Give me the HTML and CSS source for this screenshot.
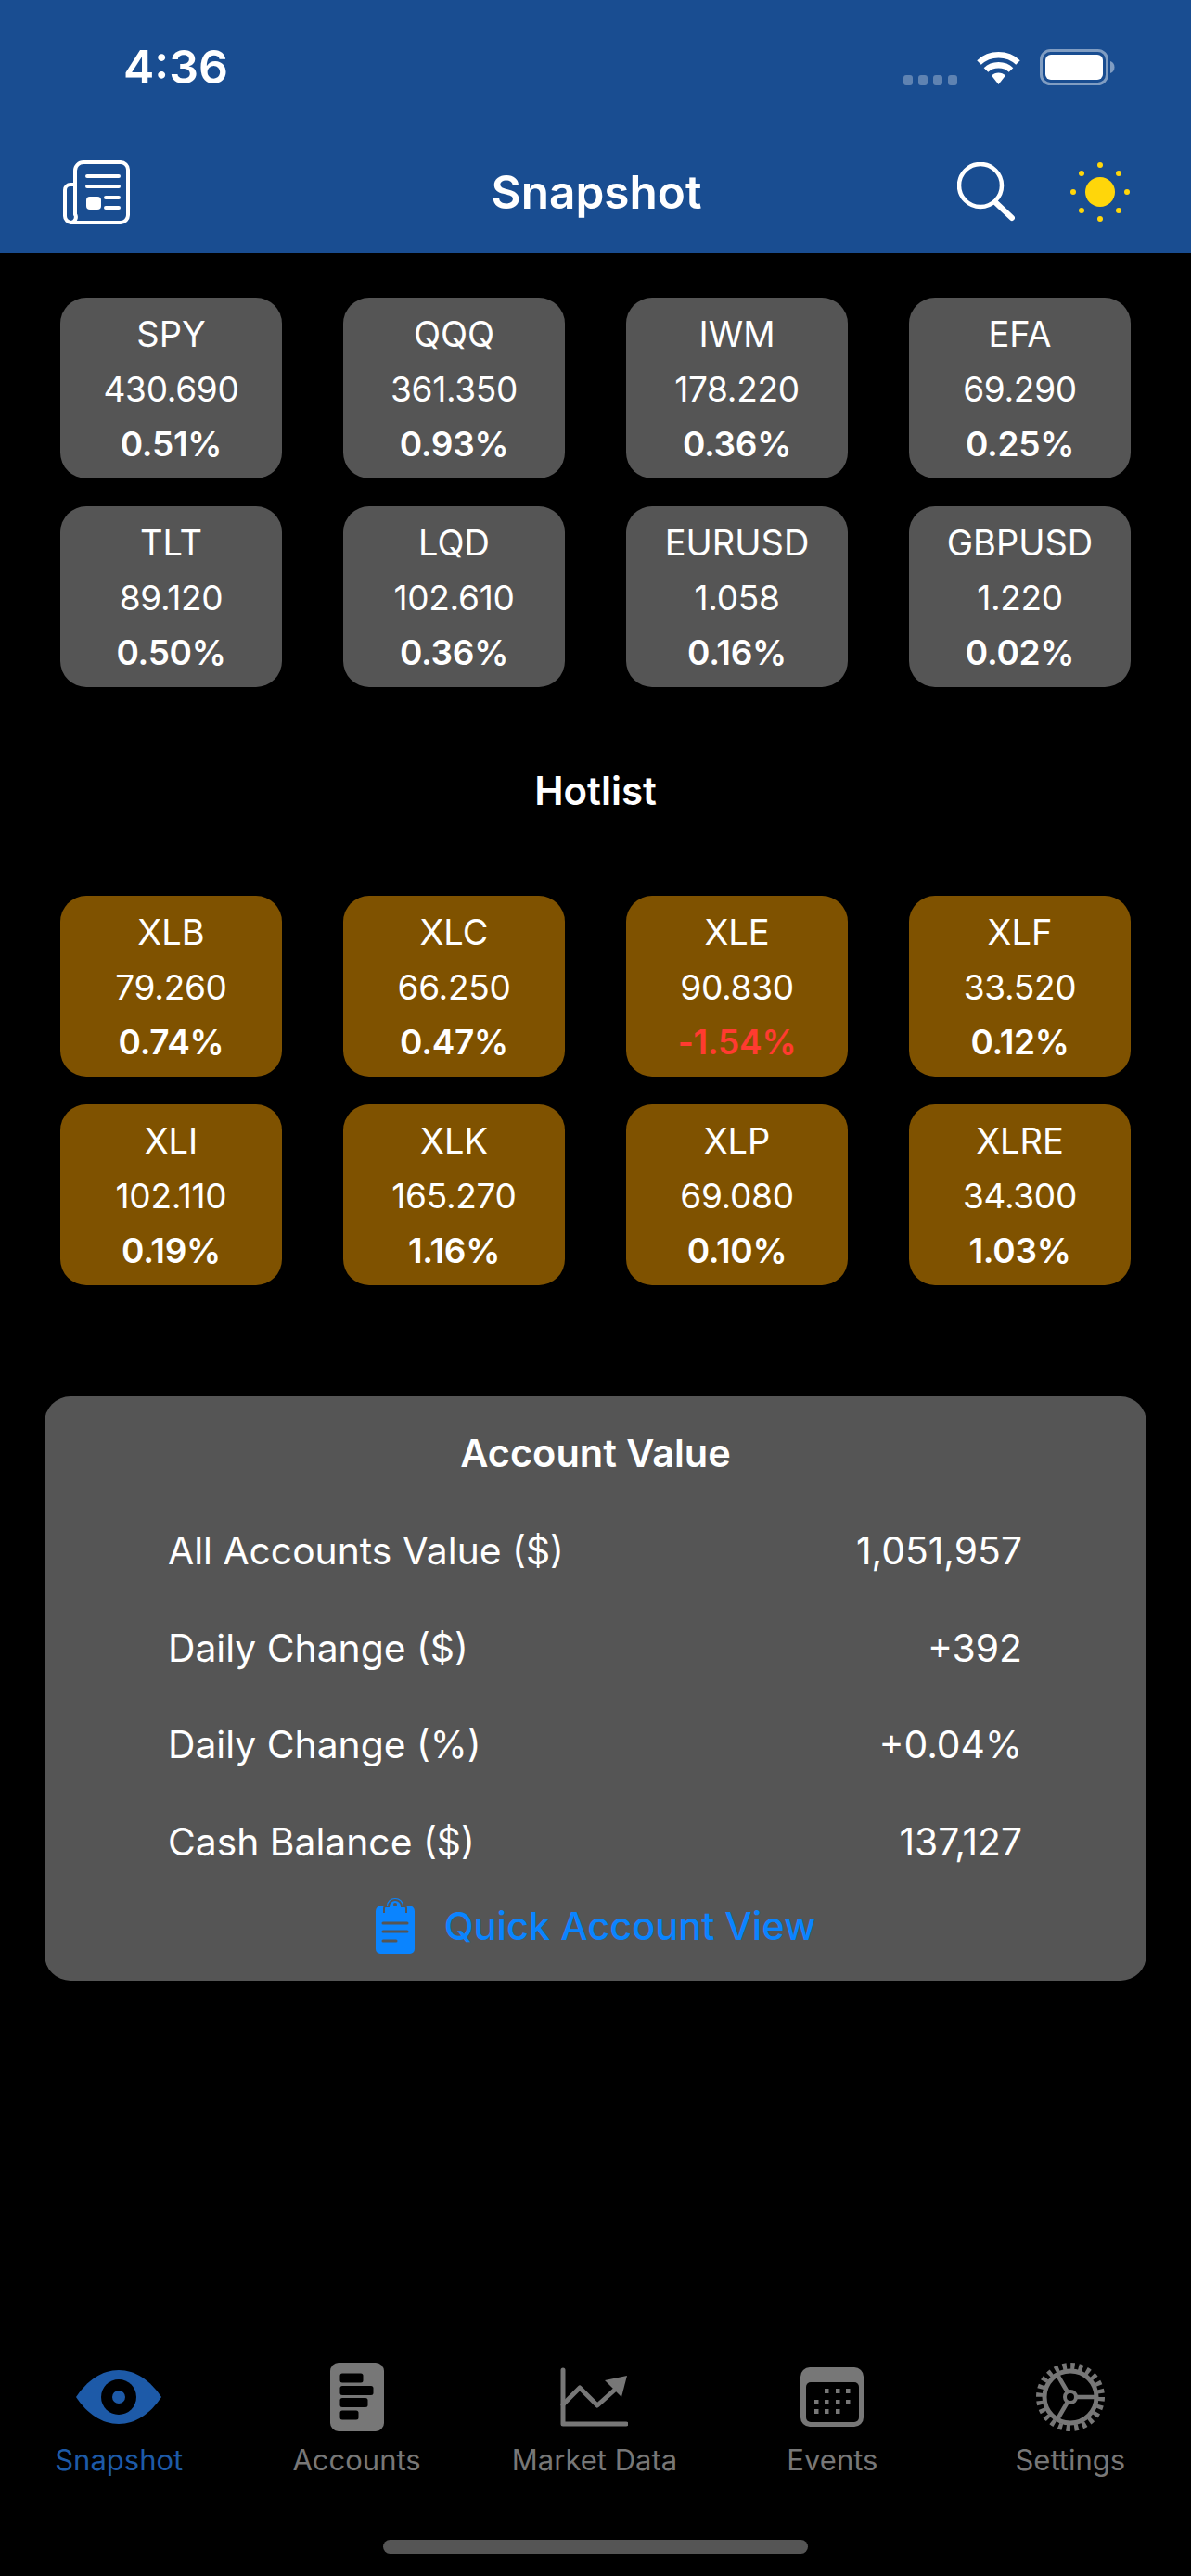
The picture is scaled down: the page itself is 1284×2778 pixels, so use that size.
FILE: index.html
```html
<!DOCTYPE html>
<html>
<head>
  <meta charset="UTF-8">
  <meta name="viewport" content="width=device-width, initial-scale=1.0"/>
  <title>Snapshot</title>
  <link rel="stylesheet" href="styles.css">
</head>
<body>
<div class="page">
  <div class="header">
    <div class="status">
      <span class="time">4:36</span>
      <div class="status-icons">
        <svg width="58" height="39" viewBox="0 0 58 39"><g fill="#fff" opacity=".3"><rect x="0" y="28" width="10" height="11" rx="3"/><rect x="16" y="28" width="10" height="11" rx="3"/><rect x="32" y="28" width="10" height="11" rx="3"/><rect x="48" y="28" width="10" height="11" rx="3"/></g></svg>
        <svg width="49" height="39" viewBox="0 0 49 39"><g fill="none" stroke="#fff" stroke-width="6.5"><path d="M3.5 14.5C15 3.5 34 3.5 45.5 14.5"/><path d="M11 22.5C18 15.500 31 15.500 38 22.500"/></g><path d="M17 28.500C21 24.500 28 24.500 32 28.500L24.500 38Z" fill="#fff"/></svg>
        <svg width="81" height="39" viewBox="0 0 81 39"><rect x="1.500" y="1.500" width="71" height="36" rx="10" fill="none" stroke="#fff" stroke-opacity=".45" stroke-width="3"/><rect x="6" y="6" width="62" height="27" rx="6" fill="#fff"/><path d="M76 13c3 1 4.500 3.500 4.500 6.500s-1.500 5.500-4.500 6.500z" fill="#fff" opacity=".45"/></svg>
      </div>
    </div>
    <div class="nav">
      <svg class="nav-left" width="72" height="69" viewBox="0 0 72 69"><g fill="none" stroke="#fff" stroke-width="4" stroke-linecap="round"><path d="M13 58V11a9 9 0 0 1 9-9h40a8 8 0 0 1 8 8v49a8 8 0 0 1-8 8H9"/><path d="M13 26H8a6 6 0 0 0-6 6v28a7 7 0 0 0 7 7a6 6 0 0 0 4-9"/><path d="M26 17H60M26 28H60M46 40H60M46 51H60"/></g><rect x="25" y="39" width="16" height="14" rx="4" fill="#fff"/></svg>
      <div class="nav-title">Snapshot</div>
      <div class="nav-right">
        <svg width="62" height="64" viewBox="0 0 62 64"><circle cx="25" cy="25" r="23" fill="none" stroke="#fff" stroke-width="4.500"/><path d="M41 43L59 60" stroke="#fff" stroke-width="6" stroke-linecap="round"/></svg>
        <svg width="64" height="64" viewBox="0 0 64 64"><circle cx="32" cy="32" r="16" fill="#ffd60a"/><g fill="#ffd60a"><circle cx="32" cy="3" r="3"/><circle cx="32" cy="61" r="3"/><circle cx="3" cy="32" r="3"/><circle cx="61" cy="32" r="3"/><circle cx="12" cy="12" r="3"/><circle cx="52" cy="12" r="3"/><circle cx="12" cy="52" r="3"/><circle cx="52" cy="52" r="3"/></g></svg>
      </div>
    </div>
  </div>

  <div class="main">
    <div class="tickers">
      <div class="ticker"><span>SPY</span><span class="price">430.690</span><b>0.51%</b></div>
      <div class="ticker"><span>QQQ</span><span class="price">361.350</span><b>0.93%</b></div>
      <div class="ticker"><span>IWM</span><span class="price">178.220</span><b>0.36%</b></div>
      <div class="ticker"><span>EFA</span><span class="price">69.290</span><b>0.25%</b></div>
      <div class="ticker"><span>TLT</span><span class="price">89.120</span><b>0.50%</b></div>
      <div class="ticker"><span>LQD</span><span class="price">102.610</span><b>0.36%</b></div>
      <div class="ticker"><span>EURUSD</span><span class="price">1.058</span><b>0.16%</b></div>
      <div class="ticker"><span>GBPUSD</span><span class="price">1.220</span><b>0.02%</b></div>
    </div>

    <h2 class="hotlist-title">Hotlist</h2>

    <div class="tickers hot">
      <div class="ticker"><span>XLB</span><span class="price">79.260</span><b>0.74%</b></div>
      <div class="ticker"><span>XLC</span><span class="price">66.250</span><b>0.47%</b></div>
      <div class="ticker"><span>XLE</span><span class="price">90.830</span><b class="neg">-1.54%</b></div>
      <div class="ticker"><span>XLF</span><span class="price">33.520</span><b>0.12%</b></div>
      <div class="ticker"><span>XLI</span><span class="price">102.110</span><b>0.19%</b></div>
      <div class="ticker"><span>XLK</span><span class="price">165.270</span><b>1.16%</b></div>
      <div class="ticker"><span>XLP</span><span class="price">69.080</span><b>0.10%</b></div>
      <div class="ticker"><span>XLRE</span><span class="price">34.300</span><b>1.03%</b></div>
    </div>

    <div class="account">
      <div class="account-title">Account Value</div>
      <div class="account-row"><span>All Accounts Value ($)</span><span>1,051,957</span></div>
      <div class="account-row"><span>Daily Change ($)</span><span>+392</span></div>
      <div class="account-row"><span>Daily Change (%)</span><span>+0.04%</span></div>
      <div class="account-row"><span>Cash Balance ($)</span><span>137,127</span></div>
      <div class="quick">
        <svg width="42" height="60" viewBox="0 0 42 60"><path d="M6 8h6a9 8 0 0 1 18 0h6a6 6 0 0 1 6 6v41a5 5 0 0 1-5 5H5a5 5 0 0 1-5-5V14a6 6 0 0 1 6-6z" fill="#0a84ff"/><path d="M9 16v-5a2 2 0 0 1 2-2h3a7 7 0 0 1 14 0h3a2 2 0 0 1 2 2v5" fill="none" stroke="#555" stroke-width="2"/><circle cx="21" cy="7" r="2" fill="#555"/><path d="M8 27H34M8 36H34M8 46H22" stroke="#555" stroke-width="3" stroke-linecap="round"/></svg>
        <span>Quick Account View</span>
      </div>
    </div>
  </div>

  <div class="tabbar">
    <div class="tab active">
      <div class="tab-icon"><svg width="92" height="58" viewBox="0 0 92 58"><path d="M0 29C12 11 28 0 46 0s34 11 46 29C80 47 64 58 46 58S12 47 0 29z" fill="#1d5aa8"/><circle cx="46" cy="29" r="19" fill="#000"/><circle cx="46" cy="29" r="7" fill="#1d5aa8"/></svg></div>
      <span>Snapshot</span>
    </div>
    <div class="tab">
      <div class="tab-icon"><svg width="58" height="74" viewBox="0 0 58 74"><rect width="58" height="74" rx="9" fill="#777"/><g fill="#000"><rect x="10.500" y="11.500" width="25" height="10" rx="2.500"/><rect x="10.500" y="25" width="36" height="10" rx="2.500"/><rect x="10.500" y="38" width="30" height="10" rx="2.500"/><rect x="10.500" y="51.500" width="20" height="10" rx="2.500"/></g></svg></div>
      <span>Accounts</span>
    </div>
    <div class="tab">
      <div class="tab-icon"><svg width="73" height="64" viewBox="0 0 73 64"><g fill="none" stroke="#777" stroke-width="5" stroke-linecap="round" stroke-linejoin="round"><path d="M3 3V61H71"/><path d="M3 40L21 22L40 41L59 24"/></g><path d="M72 9L48 14L66 32Z" fill="#777"/></svg></div>
      <span>Market Data</span>
    </div>
    <div class="tab">
      <div class="tab-icon"><svg width="68" height="64" viewBox="0 0 68 64"><rect width="68" height="64" rx="10" fill="#777"/><rect x="6" y="16" width="57" height="43" rx="5" fill="#000"/><g fill="#777"><rect x="26" y="23" width="4.500" height="5"/><rect x="38" y="23" width="4.500" height="5"/><rect x="49" y="23" width="4.500" height="5"/><rect x="15" y="35" width="4.500" height="5"/><rect x="26" y="35" width="4.500" height="5"/><rect x="38" y="35" width="4.500" height="5"/><rect x="49" y="35" width="4.500" height="5"/><rect x="15" y="45" width="4.500" height="5"/><rect x="26" y="45" width="4.500" height="5"/><rect x="38" y="45" width="4.500" height="5"/></g></svg></div>
      <span>Events</span>
    </div>
    <div class="tab">
      <div class="tab-icon"><svg width="74" height="74" viewBox="0 0 74 74"><circle cx="37" cy="37" r="33.500" fill="none" stroke="#777" stroke-width="7" stroke-dasharray="4.400 4.370"/><circle cx="37" cy="37" r="28" fill="#000" stroke="#777" stroke-width="5"/><path d="M37 37H66M37 37L23 13M37 37L23 61" stroke="#777" stroke-width="4.500"/><circle cx="37" cy="37" r="6" fill="#000" stroke="#777" stroke-width="4"/></svg></div>
      <span>Settings</span>
    </div>
  </div>
  <div class="home-bar"></div>
</div>
</body>
</html>
```

FILE: styles.css
```css
body {
  margin: 0;
  background-color: #000;
  color: #fff;
  font-family: Inter, "Liberation Sans", sans-serif;
}
.page {
  height: 2778px;
  display: flex;
  flex-direction: column;
  overflow: hidden;
}

/* header */
.header {
  height: 273px;
  background-color: #194d91;
}
.status {
  height: 39px;
  padding: 53px 82px 0 133px;
  display: flex;
  justify-content: space-between;
  align-items: center;
}
.time {
  font-size: 50px;
  font-weight: 600;
  line-height: 39px;
}
.status-icons {
  display: flex;
  gap: 20px;
}
.nav {
  margin-top: 49px;
  height: 132px;
  padding: 0 66px 0 68px;
  display: grid;
  grid-template-columns: 1fr auto 1fr;
  align-items: center;
}
.nav-title {
  font-size: 49.500px;
  font-weight: 600;
}
.nav-right {
  display: flex;
  justify-content: flex-end;
  align-items: center;
  gap: 60px;
}

/* ticker cards */
.main {
  padding-top: 48px;
}
.tickers {
  display: grid;
  grid-template-columns: repeat(4, 239px);
  gap: 30px 66px;
  padding-left: 65px;
}
.ticker {
  height: 195px;
  box-sizing: border-box;
  padding-top: 10px;
  border-radius: 28px;
  background-color: #555;
  display: flex;
  flex-direction: column;
  align-items: center;
  font-size: 38px;
  line-height: 59px;
}
.price {
  font-size: 37px;
  letter-spacing: -0.3px;
}
.ticker b {
  font-size: 37px;
  font-weight: 600;
  letter-spacing: -0.3px;
}
.hot .ticker {
  background-color: #7f5200;
}
.ticker b.neg {
  color: #ff3b30;
}
.hotlist-title {
  margin: 88px 0 89px;
  font-size: 42px;
  font-weight: 600;
  line-height: 48px;
  text-align: center;
}

/* account card */
.account {
  margin: 120px 48px 0;
  height: 630px;
  border-radius: 28px;
  background-color: #555;
  display: flex;
  flex-direction: column;
  align-items: stretch;
  padding-top: 37px;
  box-sizing: border-box;
}
.account-title {
  font-size: 41.500px;
  font-weight: 600;
  line-height: 48px;
  text-align: center;
  margin-bottom: 29px;
}
.account-row {
  display: flex;
  justify-content: space-between;
  padding: 0 134px 0 133px;
  font-size: 40.800px;
  height: 104.500px;
  line-height: 104.500px;
}
.quick {
  display: flex;
  align-items: center;
  justify-content: center;
  gap: 32px;
  margin-top: 9px;
  color: #0a84ff;
  font-size: 41.500px;
  font-weight: 500;
}

/* bottom tabs */
.tabbar {
  margin-top: auto;
  padding-right: 2px;
  display: grid;
  grid-template-columns: repeat(5, 1fr);
}
.tab {
  display: flex;
  flex-direction: column;
  align-items: center;
  color: #777;
  font-size: 31px;
  line-height: 36px;
}
.tab-icon {
  height: 74px;
  margin-bottom: 13px;
  display: flex;
  align-items: center;
}
.tab.active {
  color: #1d5aa8;
}
.home-bar {
  width: 458px;
  height: 15px;
  margin: 68px auto 24px;
  border-radius: 8px;
  background-color: #555;
}
```
